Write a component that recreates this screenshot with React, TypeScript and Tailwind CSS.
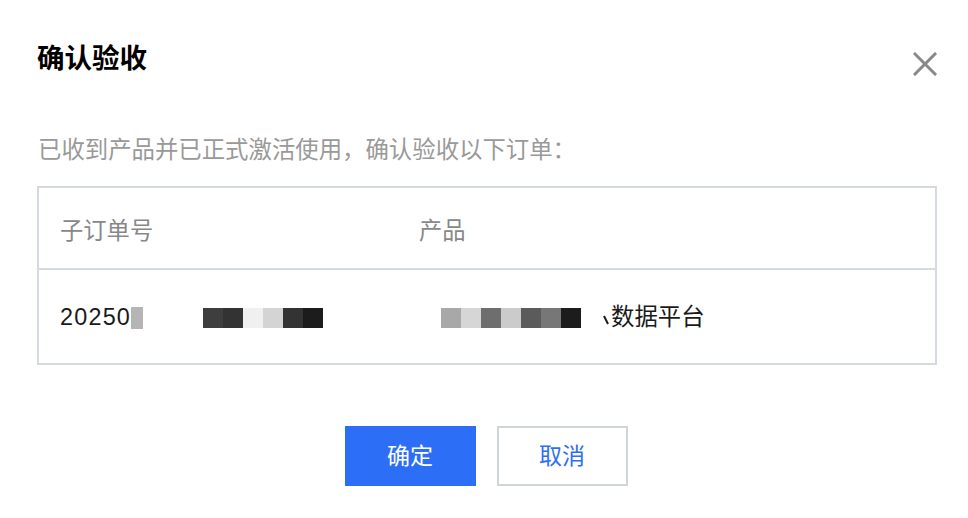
const font = {
  fontFamily: '"Liberation Sans", "Noto Sans CJK SC", sans-serif',
};

const idBlocks = ["#3e3e3e", "#333333", "#f0f0f0", "#d4d4d4", "#333333", "#1c1c1c"];
const productBlocks = ["#a8a8a8", "#d6d6d6", "#6e6e6e", "#cbcbcb", "#5b5b5b", "#777777", "#1c1c1c"];

function Mosaic({ colors }: { colors: string[] }) {
  return (
    <div className="flex h-[20px]">
      {colors.map((c, i) => (
        <span key={i} className="h-full w-[20px]" style={{ backgroundColor: c }} />
      ))}
    </div>
  );
}

export default function App() {
  return (
    <div className="h-[518px] w-[968px] bg-white pl-[37px] pr-[31px] pt-[41px]" style={font}>
      <div className="flex items-start justify-between">
        <h1 className="text-[27.5px] font-bold leading-[36px] text-black">确认验收</h1>
        <button className="mt-[11px] text-[#888888]" aria-label="关闭">
          <svg width="24" height="24" viewBox="0 0 24 24" fill="none" stroke="currentColor" strokeWidth="3" strokeLinecap="square">
            <path d="M2 2 L22 22 M22 2 L2 22" />
          </svg>
        </button>
      </div>

      <p className="mt-[57px] pl-[1px] text-[23.4px] leading-[32px] text-[#999999]">
        已收到产品并已正式激活使用，确认验收以下订单：
      </p>

      <div className="mt-[20px] border-2 border-[#d5d9e1]">
        <div className="grid h-[80px] grid-cols-[359px_1fr] items-center pt-[6px] text-[23.3px] text-[#888888]">
          <span className="pl-[21px]">子订单号</span>
          <span className="pl-[21px]">产品</span>
        </div>
        <div className="grid h-[95px] grid-cols-[359px_1fr] items-center border-t-2 border-[#d5d9e1] pt-[3px] text-[23.4px] text-[#1a1a1a]">
          <div className="flex items-center pl-[21px]">
            <span className="tracking-[1.2px]">20250</span>
            <span className="h-[22px] w-[12px] bg-[#b5b5b5]" />
            <span className="ml-[60px]">
              <Mosaic colors={idBlocks} />
            </span>
          </div>
          <div className="flex items-center pl-[43px]">
            <Mosaic colors={productBlocks} />
            <svg className="ml-[22px] mr-[2px]" width="6" height="24" viewBox="0 0 6 24" fill="none" stroke="#1a1a1a" strokeWidth="2">
              <path d="M1 10 Q3 14 5 18" />
            </svg>
            <span className="text-[#1a1a1a]">数据平台</span>
          </div>
        </div>
      </div>

      <div className="mt-[61px] flex justify-center gap-[21px] pr-[2px]">
        <button className="h-[60px] w-[131px] bg-[#2d6ef7] text-[23px] text-white">确定</button>
        <button className="h-[60px] w-[131px] border-2 border-[#d0d5dd] bg-white text-[23px] text-[#2d6ef7]">
          取消
        </button>
      </div>
    </div>
  );
}
